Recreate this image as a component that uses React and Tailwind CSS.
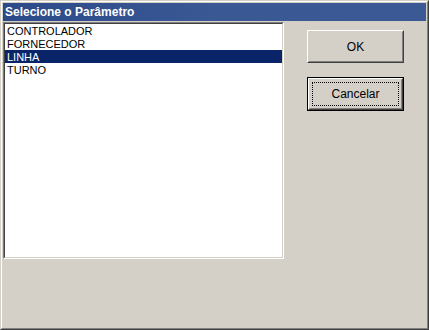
const items = ["CONTROLADOR", "FORNECEDOR", "LINHA", "TURNO"];

export default function App() {
    const selected = "LINHA";

    return (
        <div className="w-[429px] h-[330px] overflow-hidden border border-l-[#d4d0c8] border-t-[#d4d0c8] border-r-[#404040] border-b-[#404040] bg-[#d4d0c8] font-['Liberation_Sans',sans-serif]">
            <div className="flex h-full flex-col border border-l-white border-t-white border-r-[#808080] border-b-[#808080] p-px">
                {/* Title bar */}
                <div className="flex h-[18px] shrink-0 items-center bg-gradient-to-r from-[#2c4a88] via-[#3a5894] to-[#3b5995] pl-[2px]">
                    <span className="text-[12px] font-bold leading-none text-white">Selecione o Parâmetro</span>
                </div>

                {/* Client area */}
                <div className="flex flex-1 pt-px">
                    {/* List box */}
                    <div className="h-[237px] w-[281px] border border-l-[#808080] border-t-[#808080] border-r-white border-b-white">
                        <div className="h-full border border-l-[#404040] border-t-[#404040] border-r-[#d4d0c8] border-b-[#d4d0c8] bg-white">
                            {items.map((item) => (
                                <div
                                    key={item}
                                    className={`flex h-[13px] items-center pl-[2px] pt-px text-[11px] leading-none ${item === selected ? "bg-[#0a246a] text-white" : "text-black"}`}
                                >
                                    {item}
                                </div>
                            ))}
                        </div>
                    </div>

                    {/* Buttons */}
                    <div className="ml-[23px] mt-[8px] flex flex-col gap-[14px]">
                        <div className="h-[33px] w-[97px] border border-l-white border-t-white border-r-[#404040] border-b-[#404040]">
                            <div className="flex h-full items-center justify-center border border-l-[#d4d0c8] border-t-[#d4d0c8] border-r-[#808080] border-b-[#808080] text-[12px] text-black">
                                OK
                            </div>
                        </div>
                        <div className="h-[34px] w-[97px] border border-black">
                            <div className="h-full border border-l-white border-t-white border-r-[#404040] border-b-[#404040]">
                                <div className="h-full border border-l-[#d4d0c8] border-t-[#d4d0c8] border-r-[#808080] border-b-[#808080] p-[2px]">
                                    <div className="flex h-full items-center justify-center border border-dotted border-black text-[12px] text-black">
                                        Cancelar
                                    </div>
                                </div>
                            </div>
                        </div>
                    </div>
                </div>
            </div>
        </div>
    );
}
